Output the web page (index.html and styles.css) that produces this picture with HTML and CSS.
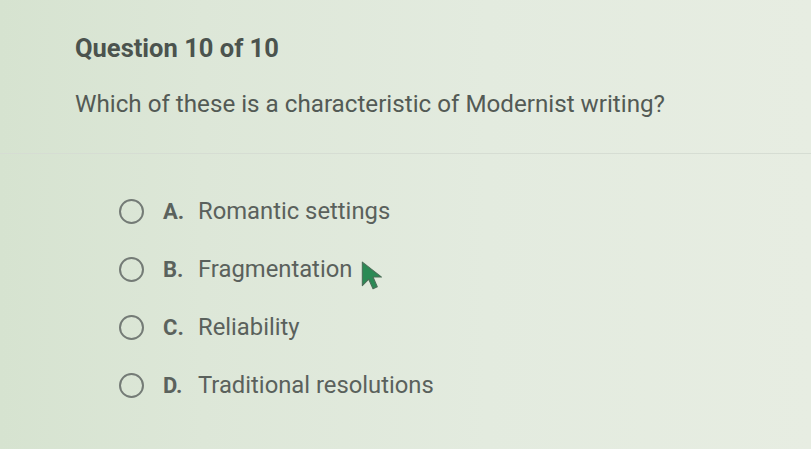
FILE: index.html
```html
<!DOCTYPE html>
<html>
<head>
<meta charset="utf-8">
<link rel="stylesheet" href="styles.css">
</head>
<body>
<div class="page">
  <header class="head">
    <h1 class="qnum">Question 10 of 10</h1>
    <p class="qtext">Which of these is a characteristic of Modernist writing?</p>
  </header>
  <hr class="divider">
  <ul class="options">
    <li class="option"><span class="radio"></span><span class="letter">A.</span><span class="label">Romantic settings</span></li>
    <li class="option"><span class="radio"></span><span class="letter">B.</span><span class="label">Fragmentation</span></li>
    <li class="option"><span class="radio"></span><span class="letter">C.</span><span class="label">Reliability</span></li>
    <li class="option"><span class="radio"></span><span class="letter">D.</span><span class="label">Traditional resolutions</span></li>
  </ul>
  <svg class="cursor" width="28" height="32" viewBox="0 0 26 30">
    <path d="M3 2 L3 24 L9 18 L13 27 L17 25 L13 16 L21 16 Z" fill="#2b8a55" stroke="#4c6e58" stroke-width="1" stroke-linejoin="round"/>
  </svg>
</div>
</body>
</html>
```
FILE: styles.css
```css
html, body {
  margin: 0;
  padding: 0;
}
body {
  width: 811px;
  height: 449px;
  overflow: hidden;
  background: linear-gradient(90deg, #d6e3d0 0%, #dde7d8 25%, #e3ebdf 60%, #e7ede2 100%);
  font-family: Roboto, "Liberation Sans", sans-serif;
  color: #555c57;
}
.page {
  position: relative;
  height: 449px;
  padding-top: 33px;
  box-sizing: border-box;
}
.head {
  padding-left: 75px;
}
.qnum {
  margin: 0;
  font-size: 25.5px;
  line-height: 30px;
  font-weight: 700;
  color: #4b534e;
}
.qtext {
  margin: 27px 0 0;
  font-size: 24.2px;
  line-height: 28px;
  color: #535a55;
}
.divider {
  margin: 35px 0 0;
  border: 0;
  height: 1px;
  background: #d6ddd3;
}
.options {
  list-style: none;
  margin: 0;
  padding: 28px 0 0 119px;
}
.option {
  display: flex;
  align-items: center;
  height: 58px;
}
.radio {
  width: 21px;
  height: 21px;
  border: 2px solid #747b76;
  border-radius: 50%;
  flex: none;
}
.letter {
  margin-left: 19px;
  width: 35px;
  font-size: 22px;
  font-weight: 700;
  color: #5b625d;
}
.label {
  font-size: 23.8px;
  color: #5a615c;
}
.cursor {
  position: absolute;
  left: 359px;
  top: 260px;
}
```
